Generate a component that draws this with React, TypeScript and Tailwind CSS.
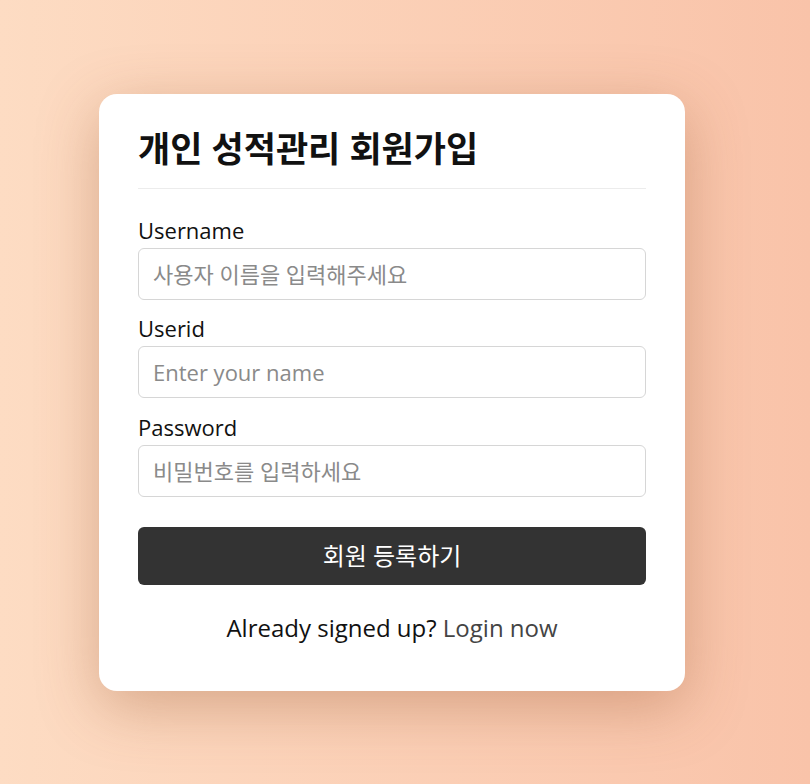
import React from "react";

const fieldClass =
  "w-full h-[52px] rounded-md border border-[#d6d6d6] bg-white px-[14px] text-[22px] text-[#222] placeholder:text-[#8a8a8a] outline-none";

const labelClass = "text-[22px] leading-[28px] text-[#111] mb-[4px]";

const App = () => {
  return (
    <div
      className="min-h-screen w-full flex items-center justify-center pr-[26px] bg-gradient-to-r from-[#fddcc3] to-[#f9c3a9]"
      style={{ fontFamily: '"Open Sans", "Noto Sans CJK KR", sans-serif' }}
    >
      <div className="w-[586px] h-[597px] bg-white rounded-[18px] shadow-[0_16px_60px_rgba(150,80,40,0.35)] px-[39px] pt-[34px] pb-[48px] flex flex-col">
        <h1 className="text-[35px] leading-[42px] font-bold text-[#111]">개인 성적관리 회원가입</h1>
        <div className="mt-[18px] h-px bg-[#ececec]" />

        <form className="mt-[27px] flex flex-col" onSubmit={(e) => e.preventDefault()}>
          <label className={labelClass}>Username</label>
          <input className={fieldClass} placeholder="사용자 이름을 입력해주세요" />

          <label className={`mt-[14px] ${labelClass}`}>Userid</label>
          <input className={fieldClass} placeholder="Enter your name" />

          <label className={`mt-[15px] ${labelClass}`}>Password</label>
          <input className={fieldClass} type="password" placeholder="비밀번호를 입력하세요" />

          <button className="mt-[30px] h-[58px] rounded-md bg-[#333333] text-white text-[24px]">
            회원 등록하기
          </button>
        </form>

        <p className="mt-[29px] text-center text-[24px] leading-[28px] text-[#111]">
          Already signed up? <span className="text-[#444]">Login now</span>
        </p>
      </div>
    </div>
  );
};

export default App;
